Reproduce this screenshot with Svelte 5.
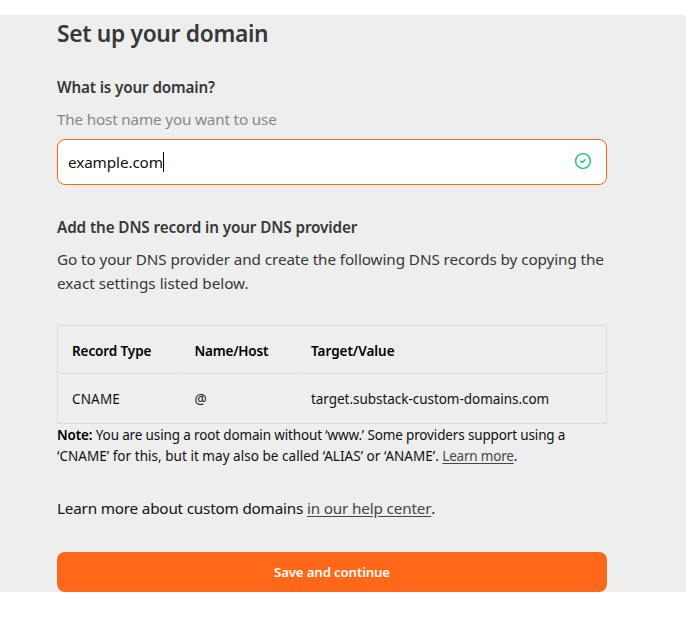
<script>
  let domain = $state('example.com');
  const record = { type: 'CNAME', host: '@', value: 'target.substack-custom-domains.com' };
</script>

<main>
  <h1>Set up your domain</h1>
  <h2>What is your domain?</h2>
  <p class="hint">The host name you want to use</p>
  <div class="field">
    <span class="value">{domain}</span><span class="caret"></span>
    <svg class="check" width="18" height="18" viewBox="0 0 18 18" fill="none" stroke="#1bbf7a" stroke-width="1.4" stroke-linecap="round" stroke-linejoin="round">
      <circle cx="9" cy="9" r="7.4" />
      <path d="M6.7 9.2l1.5 1.3 3-2.8" />
    </svg>
  </div>
  <h2 class="dns">Add the DNS record in your DNS provider</h2>
  <p class="intro">Go to your DNS provider and create the following DNS records by copying the<br /><span class="wide">exact settings listed below.</span></p>
  <table>
    <thead>
      <tr><th class="c1">Record Type</th><th class="c2 host">Name/Host</th><th class="target">Target/Value</th></tr>
    </thead>
    <tbody>
      <tr><td class="type">{record.type}</td><td>{record.host}</td><td>{record.value}</td></tr>
    </tbody>
  </table>
  <p class="note"><b>Note:</b> You are using a root domain without ‘www.’ Some providers support using a<br /><span class="line2">‘CNAME’ for this, but it may also be called ‘ALIAS’ or ‘ANAME’.</span>{' '}<span class="link">Learn more</span>.</p>
  <p class="help">Learn more about custom domains <span class="link">in our help center</span>.</p>
  <button>Save and continue</button>
</main>

<style>
  :global(body) { background: #fff; }
  main {
    box-sizing: border-box;
    margin-top: 15px;
    height: 577px;
    padding: 0 79px 0 57px;
    background: #eee;
    color: #363737;
    font: 15.25px/24px "Noto Sans", sans-serif;
    display: flow-root;
  }
  h1, h2, p { margin: 0; white-space: nowrap; }
  h1 { font-size: 22.75px; line-height: 38px; font-weight: 600; letter-spacing: -.31px; }
  h2 { font-size: 15.25px; line-height: 24px; font-weight: 600; margin-top: 22px; letter-spacing: -.14px; }
  .hint { margin-top: 8px; color: #868787; letter-spacing: -.17px; }
  .field {
    box-sizing: border-box;
    display: flex;
    align-items: center;
    height: 46px;
    margin-top: 8px;
    padding: 0 14px 0 10px;
    border: 1px solid #ff6719;
    border-radius: 8px;
    background: #fff;
    color: #111;
  }
  .value { letter-spacing: -.1px; }
  .caret { width: 1px; height: 20px; background: #000; }
  .check { margin: 0 0 2px auto; }
  .dns { margin-top: 30px; letter-spacing: -.1px; }
  .intro { margin-top: 8px; letter-spacing: -.09px; }
  .wide { letter-spacing: 0; }
  table {
    width: 550px;
    height: 99px;
    margin-top: 30px;
    border: 1px solid #ddd;
    border-spacing: 2px;
    table-layout: fixed;
    color: #111;
    font-size: 13.5px;
    line-height: 20px;
    letter-spacing: -.04px;
  }
  th, td { height: 45px; padding: 0 12px; text-align: left; white-space: nowrap; }
  th { border-bottom: 1px solid #ddd; font-weight: 600; color: #000; letter-spacing: -.1px; }
  .host { letter-spacing: -.2px; }
  .target { letter-spacing: -.03px; }
  .type { letter-spacing: .16px; }
  .c1 { width: 96.5px; }
  .c2 { width: 90.5px; }
  .note { margin-top: 1px; color: #111; font-size: 13.5px; line-height: 21px; letter-spacing: -.145px; }
  .line2 { letter-spacing: .035px; }
  .note b { font-weight: 600; color: #000; }
  .link { color: #454646; text-decoration: underline; text-underline-offset: 2px; letter-spacing: -.2px; }
  .help { margin-top: 29px; color: #111; letter-spacing: -.19px; }
  .help .link { letter-spacing: -.16px; }
  button {
    display: block;
    width: 550px;
    height: 40px;
    margin-top: 32px;
    border: 0;
    border-radius: 8px;
    background: #ff6719;
    color: #fff;
    font: 600 13.25px/20px "Noto Sans", sans-serif;
    letter-spacing: -.15px;
  }
</style>
